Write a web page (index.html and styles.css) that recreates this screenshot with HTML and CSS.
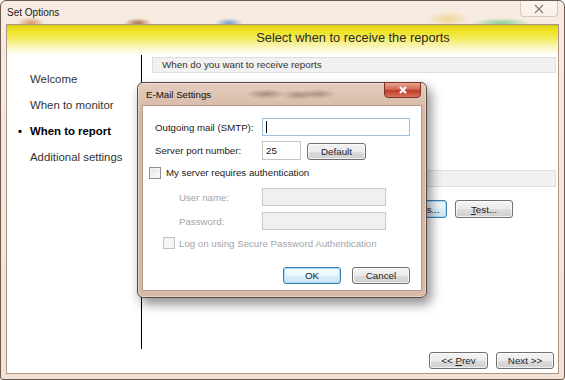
FILE: index.html
```html
<!DOCTYPE html>
<html lang="en">
<head>
    <meta charset="UTF-8">
    <title>Set Options</title>
    <link rel="stylesheet" href="styles.css">
</head>
<body>
    <div class="window">
        <div class="titlebar">
            <span class="title">Set Options</span>
            <div class="win-close">
                <svg width="12" height="10" viewBox="0 0 12 10">
                    <path d="M2 1 L10 9 M10 1 L2 9" stroke="#f6efe9" stroke-width="3"/>
                    <path d="M2 1 L10 9 M10 1 L2 9" stroke="#8f7d74" stroke-width="1.1"/>
                </svg>
            </div>
        </div>

        <div class="client">
            <div class="banner">Select when to receive the reports</div>

            <div class="body">
                <!-- wizard steps -->
                <ul class="steps">
                    <li>Welcome</li>
                    <li>When to monitor</li>
                    <li class="current">When to report</li>
                    <li>Additional settings</li>
                </ul>

                <div class="page">
                    <div class="group-bar">When do you want to receive reports</div>
                    <div class="group-bar second"></div>
                    <div class="page-buttons">
                        <button class="btn focused">Settings...</button>
                        <button class="btn"><u>T</u>est...</button>
                    </div>
                </div>
            </div>

            <div class="footer">
                <button class="btn">&lt;&lt; <u>P</u>rev</button>
                <button class="btn">Next &gt;&gt;</button>
            </div>
        </div>

        <!-- E-Mail settings dialog -->
        <div class="dialog">
            <div class="dialog-title">
                <span>E-Mail Settings</span>
                <div class="dialog-close">
                    <svg width="10" height="8" viewBox="0 0 10 8">
                        <path d="M2 1 L8 7 M8 1 L2 7" stroke="#fff" stroke-width="2.2"/>
                    </svg>
                </div>
            </div>
            <div class="dialog-client">
                <div class="row smtp-row">
                    <label class="label">Outgoing mail (SMTP):</label>
                    <div class="field focus smtp"><span class="caret"></span></div>
                </div>
                <div class="row port-row">
                    <label class="label">Server port number:</label>
                    <div class="field port">25</div>
                    <button class="btn default-btn">Default</button>
                </div>
                <div class="row check-row">
                    <span class="checkbox"></span>
                    <span class="check-label">My server requires authentication</span>
                </div>
                <div class="row auth-row user-row">
                    <label class="label disabled">User name:</label>
                    <div class="field disabled"></div>
                </div>
                <div class="row auth-row pass-row">
                    <label class="label disabled">Password:</label>
                    <div class="field disabled"></div>
                </div>
                <div class="row spa-row">
                    <span class="checkbox disabled"></span>
                    <span class="check-label disabled">Log on using Secure Password Authentication</span>
                </div>
                <div class="row dialog-buttons">
                    <button class="btn focused">OK</button>
                    <button class="btn">Cancel</button>
                </div>
            </div>
        </div>
    </div>
</body>
</html>
```

FILE: styles.css
```css
* {
    box-sizing: border-box;
}
body {
    margin: 0;
    font-family: "Liberation Sans", Arial, sans-serif;
    background: #fff;
}
.window {
    position: relative;
    width: 565px;
    height: 380px;
    border: 1px solid #6b5a50;
    border-radius: 6px 6px 3px 3px;
    padding: 0 5px 5px 5px;
    display: flex;
    flex-direction: column;
    background:
        radial-gradient(ellipse 14px 6px at 30px 22px, rgba(214, 130, 70, 0.8), rgba(214, 130, 70, 0)),
        radial-gradient(ellipse 14px 5px at 137px 22px, rgba(150, 80, 40, 0.8), rgba(150, 80, 40, 0)),
        radial-gradient(ellipse 14px 5px at 228px 22px, rgba(90, 140, 200, 0.8), rgba(90, 140, 200, 0)),
        radial-gradient(ellipse 22px 8px at 447px 18px, rgba(236, 205, 120, 0.7), rgba(236, 205, 120, 0)),
        radial-gradient(ellipse 30px 5px at 500px 22px, rgba(110, 200, 130, 0.8), rgba(110, 200, 130, 0)),
        linear-gradient(#f7ebe2, #f2e2d6);
}
.titlebar {
    height: 23px;
    display: flex;
    align-items: flex-start;
    justify-content: space-between;
}
.title {
    font-size: 10px;
    color: #1a1a1a;
    padding: 6px 0 0 1px;
}
.win-close {
    width: 38px;
    height: 16px;
    margin: 0 1px 0 0;
    border: 1px solid #d6c8be;
    border-top: none;
    border-radius: 0 0 4px 4px;
    background: linear-gradient(rgba(255, 255, 255, 0.55), rgba(255, 255, 255, 0.25));
    display: flex;
    align-items: center;
    justify-content: center;
}
.client {
    flex: 1;
    background: #fff;
    border: 1px solid #ad9584;
    display: flex;
    flex-direction: column;
}
.banner {
    height: 30px;
    padding: 5px 0 0 141px;
    text-align: center;
    font-size: 12.8px;
    color: #2a2a2a;
    background: linear-gradient(#cfc21e 0, #e6d916 2px, #efe428 7px, #f3ea58 13px, #f8f3a8 20px, #fcfae0 26px, #fff 30px);
}
.body {
    height: 294px;
    display: flex;
}
.steps {
    width: 135px;
    margin: 0;
    padding: 11px 0 0 23px;
    list-style: none;
    border-right: 1px solid #000;
    font-size: 11.4px;
    color: #333;
}
.steps li {
    height: 26px;
    line-height: 26px;
    position: relative;
}
.steps li.current {
    font-weight: bold;
    color: #000;
}
.steps li.current::before {
    content: "\2022";
    position: absolute;
    left: -12px;
}
.page {
    flex: 1;
    padding: 2px 2px 0 10px;
}
.group-bar {
    height: 16px;
    background: #f1f1f1;
    border: 1px solid #dedede;
    font-size: 9.8px;
    line-height: 14px;
    padding-left: 9px;
    color: #333;
}
.group-bar.second {
    margin-top: 97px;
    height: 17px;
}
.page-buttons {
    display: flex;
    justify-content: flex-end;
    gap: 8px;
    margin: 13px 43px 0 0;
}
.btn {
    width: 58px;
    height: 18px;
    padding: 0;
    font-family: "Liberation Sans", Arial, sans-serif;
    font-size: 9.8px;
    color: #222;
    border: 1px solid #707070;
    border-radius: 3px;
    background: linear-gradient(#f3f3f3 0, #ebebeb 50%, #dddddd 51%, #cfcfcf 100%);
    box-shadow: inset 0 0 0 1px rgba(255, 255, 255, 0.7);
}
.btn.focused {
    border-color: #3c7fb1;
    box-shadow: inset 0 0 0 1px #a8dcf4;
    background: linear-gradient(#f4fafd 0, #e9f5fc 50%, #dbeefa 51%, #cde6f7 100%);
}
.footer {
    flex: 1;
    display: flex;
    justify-content: flex-end;
    gap: 8px;
    padding: 3px 4px 0 0;
}
.footer .btn {
    height: 17px;
    width: 59px;
}
.footer .btn + .btn {
    width: 58px;
}

/* dialog */
.dialog {
    position: absolute;
    left: 136px;
    top: 81px;
    width: 290px;
    height: 216px;
    border: 1px solid #5c4a40;
    border-radius: 6px;
    padding: 0 4px 6px 4px;
    display: flex;
    flex-direction: column;
    background:
        radial-gradient(ellipse 20px 5px at 128px 11px, rgba(130, 100, 85, 0.6), rgba(130, 100, 85, 0)),
        radial-gradient(ellipse 16px 5px at 160px 12px, rgba(130, 100, 85, 0.55), rgba(130, 100, 85, 0)),
        radial-gradient(ellipse 18px 5px at 180px 11px, rgba(130, 100, 85, 0.55), rgba(130, 100, 85, 0)),
        linear-gradient(#e4cdbf, #d6b6a3 30px, #d8baa8);
    box-shadow: 4px 6px 12px rgba(0, 0, 0, 0.45), inset 0 0 0 1px rgba(255, 255, 255, 0.35);
}
.dialog-title {
    height: 22px;
    position: relative;
    font-size: 9.7px;
    color: #111;
    padding: 6px 0 0 4px;
}
.dialog-close {
    position: absolute;
    right: 1px;
    top: -1px;
    width: 37px;
    height: 16px;
    border: 1px solid #7b3327;
    border-radius: 0 0 4px 4px;
    background: linear-gradient(#e9a493, #d06a55 45%, #c23b26 55%, #d8725c);
    display: flex;
    align-items: center;
    justify-content: center;
}
.dialog-client {
    flex: 1;
    background: #fff;
    border: 1px solid #b39b8c;
    padding: 12px 11px 0 12px;
    font-size: 9.7px;
    color: #1a1a1a;
}
.row {
    display: flex;
    align-items: center;
}
.label {
    width: 107px;
    flex-shrink: 0;
}
.label.disabled,
.check-label.disabled {
    color: #a5a5a5;
}
.field {
    height: 18px;
    border: 1px solid #c5c5c5;
    background: #fff;
    padding: 0 0 0 3px;
    display: flex;
    align-items: center;
}
.field.focus {
    border-color: #9ec1e0;
}
.field.disabled {
    background: #f0f0f0;
    border-color: #c9c9c9;
    width: 124px;
}
.smtp {
    width: 150px;
    height: 18px;
}
.caret {
    width: 1px;
    height: 12px;
    background: #000;
}
.port-row {
    margin-top: 5px;
}
.port {
    width: 39px;
    height: 19px;
}
.default-btn {
    width: 59px;
    height: 17px;
    margin: 2px 0 0 6px;
}
.check-row {
    margin: 6px 0 0 -6px;
    height: 13px;
}
.checkbox {
    width: 12px;
    height: 12px;
    border: 1px solid #8e8f8f;
    background: linear-gradient(135deg, #e2e2e2, #fbfbfb);
    box-shadow: inset 0 0 0 1px #f4f4f4;
    flex-shrink: 0;
}
.checkbox.disabled {
    border-color: #c2c2c2;
    background: #f6f6f6;
}
.check-label {
    margin-left: 5px;
}
.auth-row {
    padding-left: 24px;
}
.auth-row .label {
    width: 83px;
}
.user-row {
    margin-top: 9px;
}
.pass-row {
    margin-top: 6px;
}
.spa-row {
    margin-top: 7px;
    padding-left: 8px;
    height: 12px;
}
.spa-row .check-label {
    margin-left: 4px;
}
.dialog-buttons {
    justify-content: flex-end;
    gap: 11px;
    margin-top: 18px;
}
.dialog-buttons .btn {
    height: 17px;
}
```
